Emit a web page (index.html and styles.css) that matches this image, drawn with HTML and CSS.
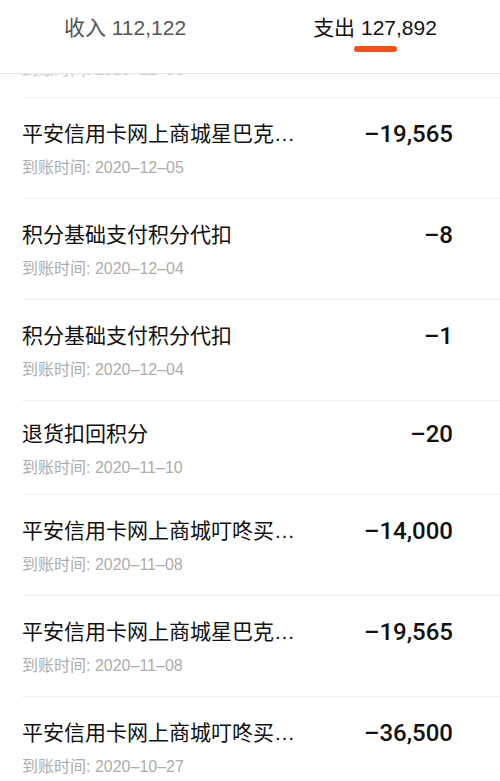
FILE: index.html
```html
<!DOCTYPE html>
<html lang="zh-CN">
<head>
<meta charset="utf-8">
<title>账单</title>
<link rel="stylesheet" href="styles.css">
</head>
<body>
<div class="page">
  <header class="tabs">
    <div class="tab">收入 112,122</div>
    <div class="tab tab-active">支出 127,892<span class="tab-bar"></span></div>
  </header>
  <ul class="list">
    <li class="row-clip">
      <div class="date date-clip">到账时间: 2020–12–06</div>
    </li>
    <li class="row">
      <div class="info"><div class="title">平安信用卡网上商城星巴克…</div><div class="date">到账时间: 2020–12–05</div></div>
      <div class="amount">–19,565</div>
    </li>
    <li class="row">
      <div class="info"><div class="title">积分基础支付积分代扣</div><div class="date">到账时间: 2020–12–04</div></div>
      <div class="amount">–8</div>
    </li>
    <li class="row">
      <div class="info"><div class="title">积分基础支付积分代扣</div><div class="date">到账时间: 2020–12–04</div></div>
      <div class="amount">–1</div>
    </li>
    <li class="row row-compact">
      <div class="info"><div class="title">退货扣回积分</div><div class="date">到账时间: 2020–11–10</div></div>
      <div class="amount">–20</div>
    </li>
    <li class="row">
      <div class="info"><div class="title">平安信用卡网上商城叮咚买…</div><div class="date">到账时间: 2020–11–08</div></div>
      <div class="amount">–14,000</div>
    </li>
    <li class="row">
      <div class="info"><div class="title">平安信用卡网上商城星巴克…</div><div class="date">到账时间: 2020–11–08</div></div>
      <div class="amount">–19,565</div>
    </li>
    <li class="row">
      <div class="info"><div class="title">平安信用卡网上商城叮咚买…</div><div class="date">到账时间: 2020–10–27</div></div>
      <div class="amount">–36,500</div>
    </li>
  </ul>
</div>
</body>
</html>
```
FILE: styles.css
```css
html, body {
  margin: 0;
  padding: 0;
  background: #fff;
}
body {
  font-family: "Liberation Sans", "Noto Sans CJK SC", sans-serif;
  color: #111;
}
.page {
  width: 500px;
  height: 781px;
  overflow: hidden;
  background: #fff;
}
.tabs {
  position: relative;
  z-index: 2;
  display: flex;
  height: 73px;
  background: #fff;
  border-bottom: 1px solid #e6e6e6;
  box-shadow: 0 1px 3px rgba(0,0,0,0.04);
}
.tab {
  position: relative;
  flex: 1;
  text-align: center;
  font-size: 21px;
  line-height: 30px;
  padding-top: 13px;
  color: #555;
}
.tab-active {
  color: #111;
}
.tab-bar {
  position: absolute;
  left: 50%;
  top: 46px;
  width: 43px;
  height: 6px;
  margin-left: -21px;
  border-radius: 3px;
  background: #f2521c;
}
.list {
  list-style: none;
  margin: 0;
  padding: 0 0 0 22px;
}
.row {
  display: flex;
  align-items: flex-start;
  justify-content: space-between;
  padding: 21px 47px 20px 0;
  border-bottom: 1px solid #efefef;
  height: 59px;
}
.row-compact {
  padding-top: 18px;
  padding-bottom: 16px;
}
.info {
  min-width: 0;
}
.title {
  font-size: 21px;
  line-height: 30px;
  color: #111;
  white-space: nowrap;
}
.date {
  margin-top: 8px;
  font-size: 16px;
  line-height: 21px;
  color: #adadad;
}
.row-clip {
  height: 23px;
  overflow: hidden;
  border-bottom: 1px solid #efefef;
}
.row-clip .date-clip {
  margin-top: -15px;
  color: #d0d0d0;
}
.amount {
  font-family: "Roboto", "Liberation Sans", sans-serif;
  font-weight: 500;
  font-size: 24px;
  line-height: 30px;
  color: #111;
}
```
